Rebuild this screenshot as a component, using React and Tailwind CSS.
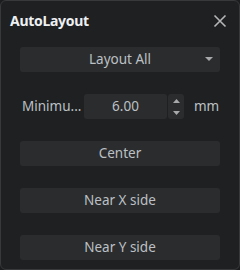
import React from 'react';

const Btn = ({ children }) => (
    <button className="h-[25px] w-full rounded-[3px] bg-[#2b2c2e] text-[13.5px] text-[#bcc0c4]">
        {children}
    </button>
);

const App = () => {
    return (
        <div className="w-[240px] h-[270px] bg-[#1c1d1f] font-['Noto_Sans',sans-serif]">
            <div className="h-full w-full rounded-[6px] border border-[#38393b] bg-[#1f2022] flex flex-col">
                {/* Header */}
                <div className="h-[39px] flex items-center justify-between pl-[9px] pr-[12px]">
                    <span className="text-[14px] font-bold text-[#eef0f2] tracking-[-0.3px]">AutoLayout</span>
                    <svg width="14" height="14" viewBox="0 0 14 14" className="text-[#b5b6b8]">
                        <path d="M1.5 1.5L12.5 12.5M12.5 1.5L1.5 12.5" stroke="currentColor" strokeWidth="1.6" />
                    </svg>
                </div>

                <div className="flex flex-col gap-[22px] px-[19px] pt-[7px]">
                    {/* Dropdown */}
                    <div className="relative h-[25px] rounded-[3px] bg-[#2b2c2e] flex items-center justify-center text-[13.5px] text-[#bcc0c4]">
                        Layout All
                        <svg width="8" height="5" viewBox="0 0 8 5" className="absolute right-[7px] top-[10px] text-[#a8a9ab]">
                            <path d="M0 0H8L4 4Z" fill="currentColor" />
                        </svg>
                    </div>

                    {/* Minimum row */}
                    <div className="flex items-center h-[25px]">
                        <span className="w-[64px] pl-[2px] text-[13.5px] text-[#bcc0c4]">Minimu...</span>
                        <div className="w-[83px] h-[25px] rounded-[3px] bg-[#2b2c2e] flex items-center justify-center text-[13.5px] text-[#bcc0c4]">
                            6.00
                        </div>
                        <div className="ml-[1px] w-[16px] h-[25px] rounded-[3px] bg-[#2b2c2e] flex flex-col items-center justify-center gap-[8px]">
                            <svg width="7" height="4" viewBox="0 0 7 4" className="text-[#a8a9ab]">
                                <path d="M0 4H7L3.5 0Z" fill="currentColor" />
                            </svg>
                            <svg width="7" height="4" viewBox="0 0 7 4" className="text-[#a8a9ab]">
                                <path d="M0 0H7L3.5 4Z" fill="currentColor" />
                            </svg>
                        </div>
                        <span className="ml-[10px] text-[13.5px] text-[#bcc0c4]">mm</span>
                    </div>

                    <Btn>Center</Btn>
                    <Btn>Near X side</Btn>
                    <Btn>Near Y side</Btn>
                </div>
            </div>
        </div>
    );
};

export default App;
